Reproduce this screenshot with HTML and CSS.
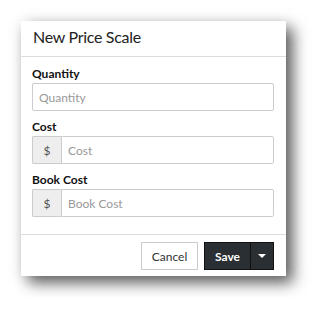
FILE: index.html
```html
<!DOCTYPE html>
<html lang="en">
<head>
    <meta charset="UTF-8">
    <title>New Price Scale</title>
    <link rel="stylesheet" href="styles.css">
</head>
<body>
    <div class="modal">
        <div class="modal-header">
            <h2 class="modal-title">New Price Scale</h2>
        </div>

        <div class="modal-body">
            <div class="form-group">
                <label for="quantity">Quantity</label>
                <input type="text" id="quantity" class="form-control" placeholder="Quantity">
            </div>
            <div class="form-group">
                <label for="cost">Cost</label>
                <div class="input-group">
                    <span class="addon">$</span>
                    <input type="text" id="cost" class="form-control" placeholder="Cost">
                </div>
            </div>
            <div class="form-group">
                <label for="bookCost">Book Cost</label>
                <div class="input-group">
                    <span class="addon">$</span>
                    <input type="text" id="bookCost" class="form-control" placeholder="Book Cost">
                </div>
            </div>
        </div>

        <div class="modal-footer">
            <button class="btn btn-default">Cancel</button>
            <div class="btn-split">
                <button class="btn btn-dark">Save</button>
                <button class="btn btn-dark btn-caret"><span class="caret"></span></button>
            </div>
        </div>
    </div>
</body>
</html>
```

FILE: styles.css
```css
body {
    margin: 0;
    padding: 21px;
    background-color: #ffffff;
    font-family: Lato, "Open Sans", sans-serif;
    color: #222;
}

.modal {
    width: 265px;
    background-color: #ffffff;
    box-shadow: 7px 7px 14px rgba(0, 0, 0, 0.62), 0 0 14px rgba(0, 0, 0, 0.08);
}

.modal-header {
    padding: 6px 12px 10px;
    border-bottom: 1px solid #dcdcdc;
}

.modal-title {
    margin: 0;
    font-size: 16px;
    font-weight: normal;
    line-height: 19px;
    letter-spacing: -0.3px;
    color: #222;
}

.modal-body {
    padding: 9px 12px 9px 11px;
}

.form-group {
    margin-bottom: 8px;
}

.form-group label {
    display: block;
    font-size: 12px;
    font-weight: bold;
    line-height: 15px;
    margin-bottom: 2px;
    color: #111;
}

.form-control {
    box-sizing: border-box;
    width: 100%;
    height: 28px;
    padding: 0 6px;
    border: 1px solid #cccccc;
    border-radius: 2px;
    font-family: inherit;
    font-size: 12px;
    color: #333;
}

.form-control::placeholder {
    color: #999;
}

.input-group {
    display: flex;
}

.input-group .form-control {
    flex: 1;
    border-radius: 0 2px 2px 0;
}

.addon {
    box-sizing: border-box;
    width: 29px;
    height: 28px;
    display: flex;
    align-items: center;
    justify-content: center;
    background-color: #eeeeee;
    border: 1px solid #cccccc;
    border-right: none;
    border-radius: 2px 0 0 2px;
    font-size: 12px;
    color: #555;
}

.modal-footer {
    display: flex;
    justify-content: flex-end;
    gap: 6px;
    padding: 7px 12px 6px;
    border-top: 1px solid #dcdcdc;
}

.btn {
    box-sizing: border-box;
    height: 28px;
    font-family: inherit;
    font-size: 12px;
    cursor: pointer;
}

.btn-default {
    width: 57px;
    background-color: #ffffff;
    border: 1px solid #cccccc;
    color: #333;
}

.btn-split {
    display: flex;
}

.btn-dark {
    background-color: #2a2f33;
    border: 1px solid #111;
    color: #ffffff;
    font-weight: bold;
}

.btn-dark:first-child {
    width: 46px;
    border-right: none;
}

.btn-caret {
    width: 24px;
    padding: 0;
    display: flex;
    align-items: center;
    justify-content: center;
}

.caret {
    width: 0;
    height: 0;
    border-left: 4px solid transparent;
    border-right: 4px solid transparent;
    border-top: 4px solid #ffffff;
}
```
